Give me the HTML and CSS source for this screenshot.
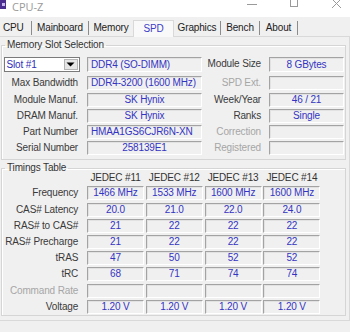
FILE: index.html
```html
<!DOCTYPE html>
<html>
<head>
<meta charset="utf-8">
<title>CPU-Z</title>
<link rel="stylesheet" href="styles.css">
</head>
<body>
<div class="titlebar">
  <div class="app-icon"><span class="app-icon-mark"></span></div>
  <div class="title">CPU-Z</div>
  <svg class="controls" width="110" height="14" viewBox="0 0 110 14">
    <line x1="7" y1="4.5" x2="17" y2="4.5" stroke="#9a9a9a" stroke-width="1"/>
    <rect x="50.5" y="-3.5" width="7" height="10" fill="none" stroke="#9a9a9a" stroke-width="1"/>
    <path d="M92 -1 L101 8 M101 -1 L92 8" stroke="#9a9a9a" stroke-width="1" fill="none"/>
  </svg>
</div>
<nav class="tabs">
  <div class="tab t-cpu">CPU</div>
  <div class="tab t-main">Mainboard</div>
  <div class="tab t-mem">Memory</div>
  <div class="tab active t-spd">SPD</div>
  <div class="tab t-gfx">Graphics</div>
  <div class="tab t-bench">Bench</div>
  <div class="tab t-about">About</div>
</nav>
<div class="panel">
  <fieldset class="group group-slot">
    <legend>Memory Slot Selection</legend>
    <div class="slot-grid">
      <div class="combo">
        <span class="combo-val">Slot #1</span>
        <span class="combo-btn"><svg width="9" height="5" viewBox="0 0 9 5"><path d="M0.5 0.5 H8.5 L4.5 4.5 Z" fill="#000"/></svg></span>
      </div>
      <div class="field left first">DDR4 (SO-DIMM)</div>
      <div class="lbl">Module Size</div>
      <div class="field first">8 GBytes</div>

      <div class="lbl">Max Bandwidth</div>
      <div class="field left">DDR4-3200 (1600 MHz)</div>
      <div class="lbl dis">SPD Ext.</div>
      <div class="field"></div>

      <div class="lbl">Module Manuf.</div>
      <div class="field">SK Hynix</div>
      <div class="lbl">Week/Year</div>
      <div class="field">46 / 21</div>

      <div class="lbl">DRAM Manuf.</div>
      <div class="field">SK Hynix</div>
      <div class="lbl">Ranks</div>
      <div class="field">Single</div>

      <div class="lbl">Part Number</div>
      <div class="field left">HMAA1GS6CJR6N-XN</div>
      <div class="lbl dis">Correction</div>
      <div class="field"></div>

      <div class="lbl">Serial Number</div>
      <div class="field">258139E1</div>
      <div class="lbl dis">Registered</div>
      <div class="field"></div>
    </div>
  </fieldset>

  <fieldset class="group group-timings">
    <legend>Timings Table</legend>
    <div class="timings">
      <div></div>
      <div class="hdr">JEDEC #11</div>
      <div class="hdr">JEDEC #12</div>
      <div class="hdr">JEDEC #13</div>
      <div class="hdr">JEDEC #14</div>

      <div class="lbl">Frequency</div>
      <div class="field">1466 MHz</div>
      <div class="field">1533 MHz</div>
      <div class="field">1600 MHz</div>
      <div class="field">1600 MHz</div>

      <div class="lbl">CAS# Latency</div>
      <div class="field">20.0</div>
      <div class="field">21.0</div>
      <div class="field">22.0</div>
      <div class="field">24.0</div>

      <div class="lbl">RAS# to CAS#</div>
      <div class="field">21</div>
      <div class="field">22</div>
      <div class="field">22</div>
      <div class="field">22</div>

      <div class="lbl">RAS# Precharge</div>
      <div class="field">21</div>
      <div class="field">22</div>
      <div class="field">22</div>
      <div class="field">22</div>

      <div class="lbl">tRAS</div>
      <div class="field">47</div>
      <div class="field">50</div>
      <div class="field">52</div>
      <div class="field">52</div>

      <div class="lbl">tRC</div>
      <div class="field">68</div>
      <div class="field">71</div>
      <div class="field">74</div>
      <div class="field">74</div>

      <div class="lbl dis">Command Rate</div>
      <div class="field"></div>
      <div class="field"></div>
      <div class="field"></div>
      <div class="field"></div>

      <div class="lbl">Voltage</div>
      <div class="field">1.20 V</div>
      <div class="field">1.20 V</div>
      <div class="field">1.20 V</div>
      <div class="field">1.20 V</div>
    </div>
  </fieldset>
</div>
</body>
</html>
```

FILE: styles.css
```css
* { box-sizing: border-box; }
html, body { margin: 0; padding: 0; }
body {
  width: 350px;
  height: 332px;
  overflow: hidden;
  background: #f0f0f0;
  font-family: "Liberation Sans", Arial, sans-serif;
  font-size: 10px;
  letter-spacing: -0.15px;
  color: #333;
}

/* title bar */
.titlebar {
  height: 17px;
  background: #ffffff;
  display: flex;
  align-items: flex-start;
}
.app-icon {
  width: 6px;
  height: 9px;
  background: #4a2d8f;
  display: flex;
  align-items: center;
  justify-content: center;
}
.app-icon-mark {
  width: 3px;
  height: 3px;
  background: #c9b8ec;
}
.title {
  margin-left: 6px;
  font-family: "Open Sans", "Liberation Sans", sans-serif;
  font-size: 11px;
  letter-spacing: 0;
  line-height: 14px;
  color: #9a9a9a;
}
.controls {
  margin-left: auto;
  display: block;
}

/* tabs */
.tabs {
  height: 19px;
  display: flex;
  align-items: flex-end;
}
.tab {
  height: 14px;
  line-height: 14px;
  text-align: center;
  color: #222;
  border-right: 1px solid #8c8c8c;
  margin-bottom: 1px;
  white-space: nowrap;
}
.t-cpu { width: 32px; text-align: left; padding-left: 3px; }
.t-main { width: 57px; }
.t-mem { width: 44px; border-right: none; }
.t-spd { width: 41px; }
.t-gfx { width: 47px; }
.t-bench { width: 39px; }
.t-about { width: 38px; }
.tab.active {
  height: 17px;
  line-height: 15px;
  margin-bottom: -1px;
  background: #f9f9f9;
  border: 1px solid #d9d9d9;
  border-bottom: none;
  color: #3c3cc8;
  position: relative;
  z-index: 1;
}

/* panel */
.panel {
  height: 285px;
  border-top: 1px solid #d9d9d9;
  border-right: 1px solid #d9d9d9;
  border-bottom: 1px solid #d9d9d9;
  padding: 0 1px 0 1px;
  background: #f0f0f0;
}

.group {
  margin: 2px 2px 0 0;
  border: 1px solid #d5d5d5;
  box-shadow: inset 1px 1px 0 #ffffff;
  padding: 0 1px;
  min-width: 0;
}
.group legend {
  margin-left: 2px;
  padding: 0 2px;
  line-height: 12px;
  color: #333;
}
.group-slot { padding-top: 6px; padding-bottom: 4px; }
.group-timings { margin-top: 2px; padding-bottom: 1px; }

/* memory slot grid */
.slot-grid {
  display: grid;
  grid-template-columns: 84px 116px 66px 76px;
  grid-template-rows: 17px repeat(5, 14px);
  row-gap: 2.25px;
}
.lbl {
  text-align: right;
  line-height: 14px;
  white-space: nowrap;
  color: #3a3a3a;
}
.slot-grid .lbl { padding-right: 9px; }
.slot-grid .lbl:nth-child(4n+3) { padding-right: 8px; }
.lbl.dis { color: #a6a6a6; }

.field {
  height: 14px;
  line-height: 12px;
  text-align: center;
  white-space: nowrap;
  overflow: hidden;
  color: #3434c2;
  border-style: solid;
  border-width: 1px;
  border-color: #a3a3a3 #ffffff #ffffff #a3a3a3;
  box-shadow: inset 1px 1px 0 #e2e2e2;
  background: #f0f0f0;
}
.field.left { text-align: left; padding-left: 3px; }
.field.first { height: 15px; line-height: 13px; align-self: start; }
.slot-grid .field { margin-right: 1px; }

.combo {
  width: 76px;
  height: 15px;
  margin-left: 0.5px;
  background: #ffffff;
  border: 1px solid #7a7a7a;
  display: flex;
  align-items: center;
  align-self: start;
}
.combo-val {
  flex: 1;
  padding-left: 2px;
  color: #2e2eb8;
  line-height: 13px;
}
.combo-btn {
  width: 14px;
  height: 11px;
  margin-right: 1px;
  background: #e6e6e6;
  border: 1px solid #b4b4b4;
  display: flex;
  align-items: center;
  justify-content: center;
}
.combo-btn svg { display: block; }

/* timings grid */
.timings {
  margin-top: -3px;
  display: grid;
  grid-template-columns: 82.2px repeat(4, 57px);
  grid-template-rows: 13px repeat(8, 14px);
  column-gap: 1.8px;
  row-gap: 2.2px;
}
.timings .lbl { padding-right: 7px; }
.hdr {
  text-align: center;
  line-height: 13px;
  white-space: nowrap;
  color: #333;
}
```
